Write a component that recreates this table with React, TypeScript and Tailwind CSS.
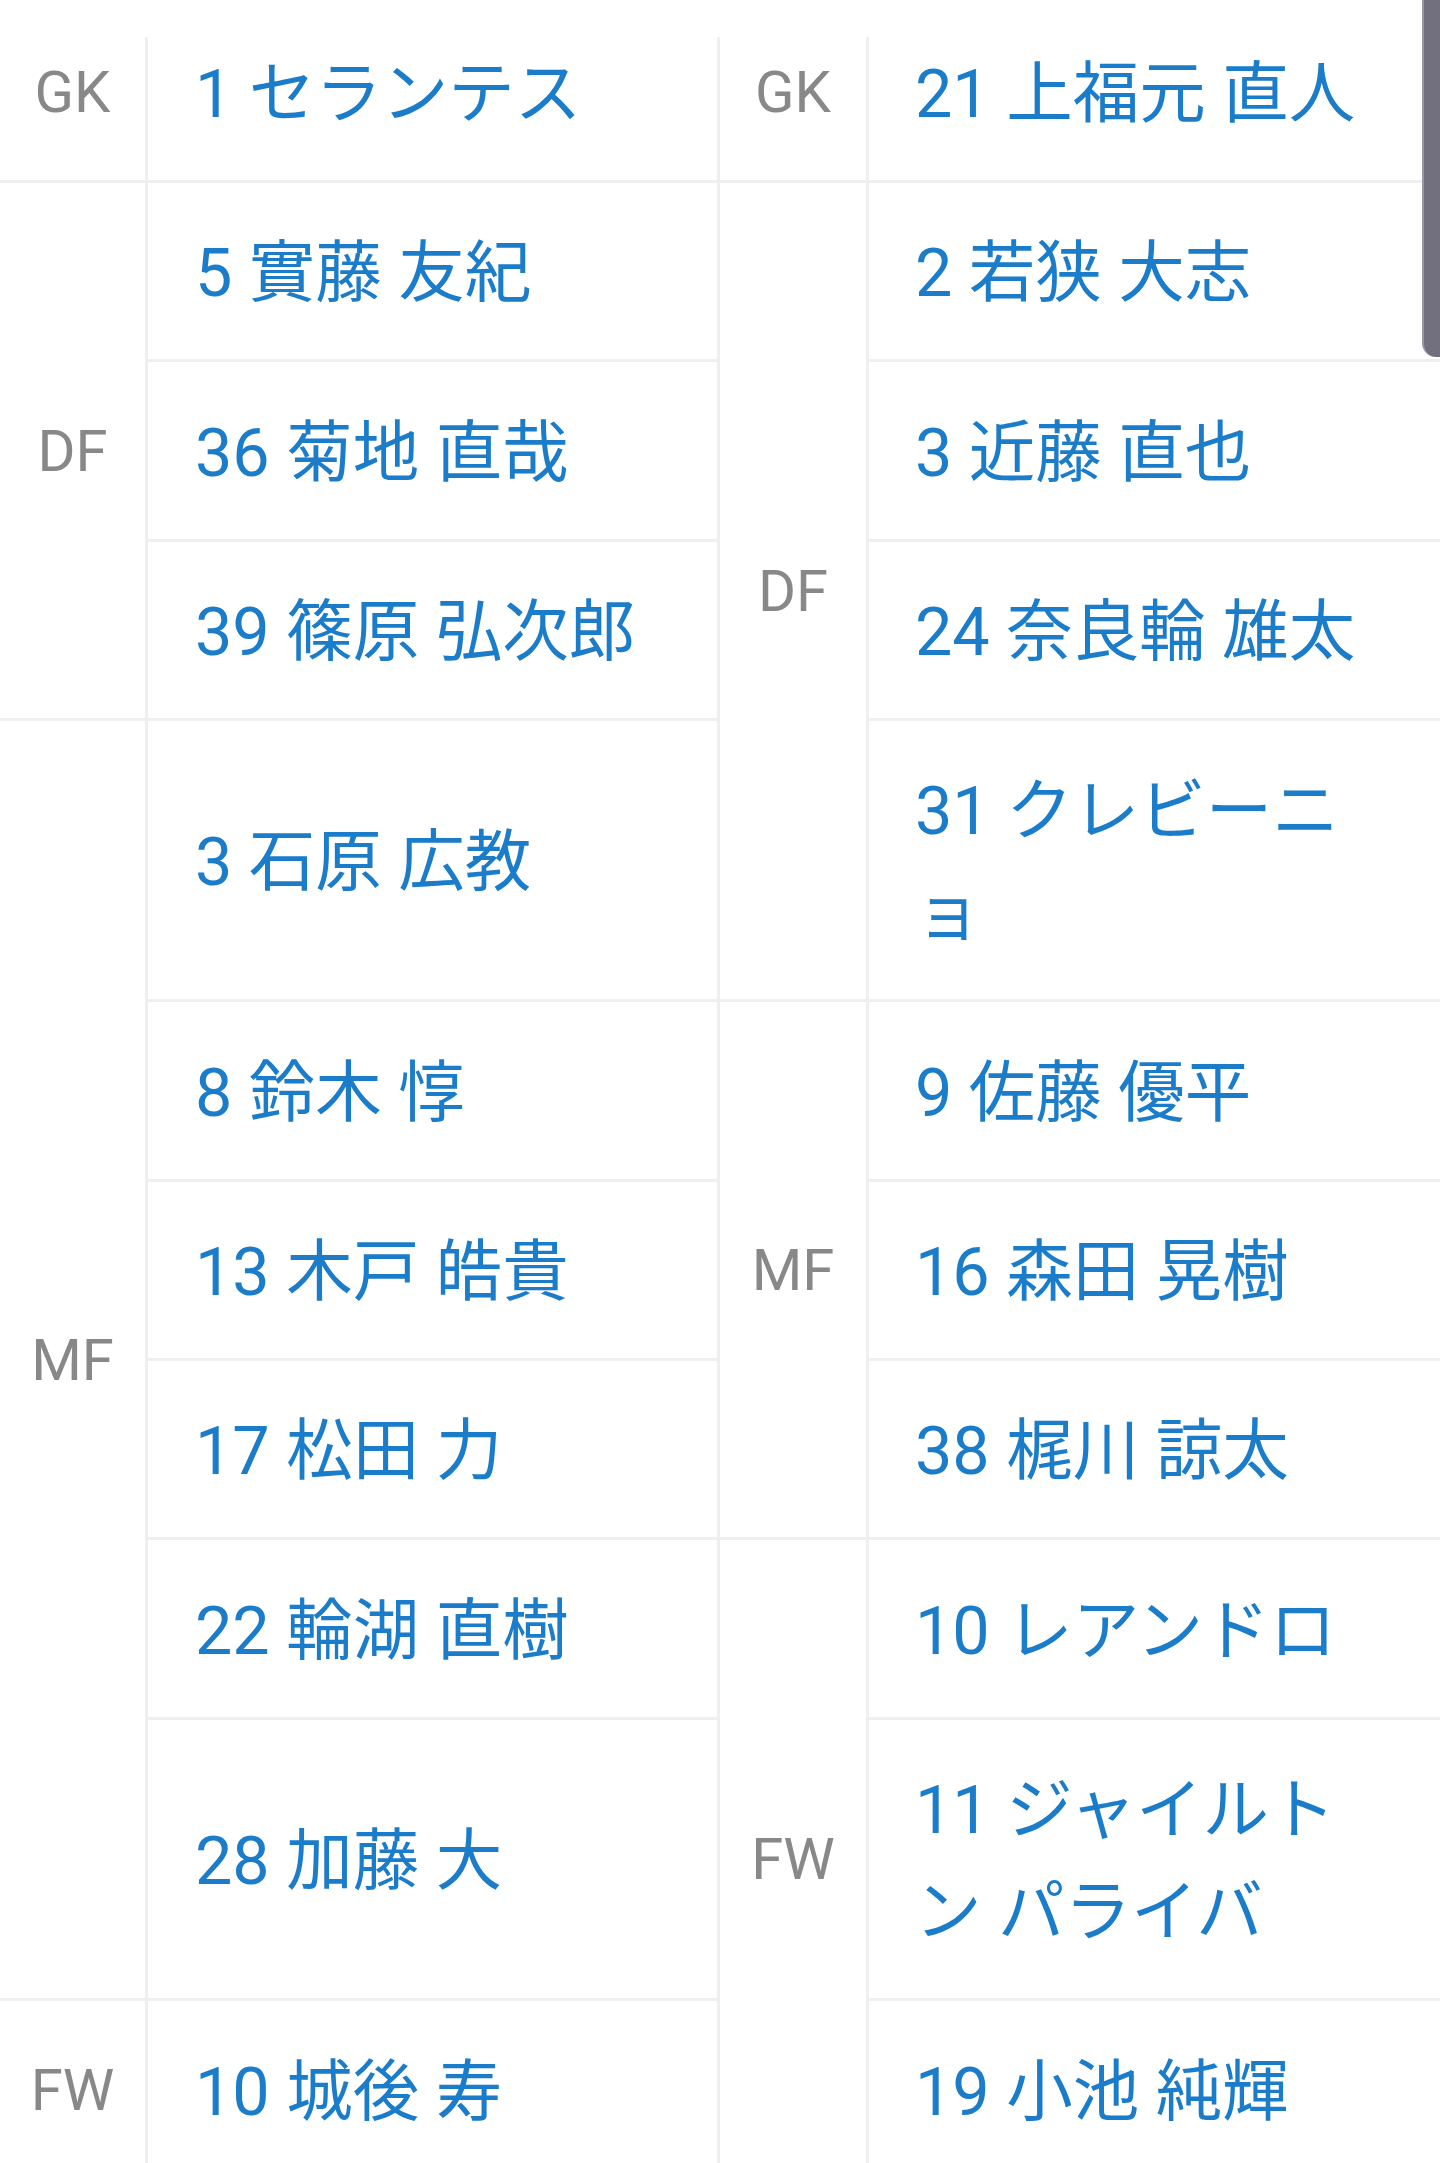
import React from 'react';

type Cell = { pos?: string; span?: number; name: React.ReactNode };
type Row = { h: string; left: Cell; right: Cell };

const rows: Row[] = [
  { h: 'h-[180px]', left: { pos: 'GK', span: 1, name: '1 セランテス' }, right: { pos: 'GK', span: 1, name: '21 上福元 直人' } },
  { h: 'h-[179px]', left: { pos: 'DF', span: 3, name: '5 實藤 友紀' }, right: { pos: 'DF', span: 4, name: '2 若狭 大志' } },
  { h: 'h-[180px]', left: { name: '36 菊地 直哉' }, right: { name: '3 近藤 直也' } },
  { h: 'h-[179px]', left: { name: '39 篠原 弘次郎' }, right: { name: '24 奈良輪 雄太' } },
  {
    h: 'h-[281px]',
    left: { pos: 'MF', span: 6, name: '3 石原 広教' },
    right: {
      name: (
        <>
          31 クレビーニ
          <br />ョ
        </>
      ),
    },
  },
  { h: 'h-[180px]', left: { name: '8 鈴木 惇' }, right: { pos: 'MF', span: 3, name: '9 佐藤 優平' } },
  { h: 'h-[179px]', left: { name: '13 木戸 皓貴' }, right: { name: '16 森田 晃樹' } },
  { h: 'h-[179px]', left: { name: '17 松田 力' }, right: { name: '38 梶川 諒太' } },
  { h: 'h-[180px]', left: { name: '22 輪湖 直樹' }, right: { pos: 'FW', span: 3, name: '10 レアンドロ' } },
  {
    h: 'h-[281px]',
    left: { name: '28 加藤 大' },
    right: {
      name: (
        <>
          11 ジャイルト
          <br />
          ン パライバ
        </>
      ),
    },
  },
  { h: 'h-[180px]', left: { pos: 'FW', span: 1, name: '10 城後 寿' }, right: { name: '19 小池 純輝' } },
];

const font = { fontFamily: 'Roboto, "Noto Sans CJK JP", sans-serif' };

function PosCell({ pos, span }: { pos: string; span?: number }) {
  return (
    <td
      rowSpan={span}
      className="border-r-[3px] border-b-[3px] border-[#efefef] text-center align-middle text-[58px] leading-none text-[#888888]"
    >
      {pos}
    </td>
  );
}

function NameCell({ name, last }: { name: React.ReactNode; last?: boolean }) {
  return (
    <td
      className={
        last
          ? 'border-b-[3px] border-[#efefef] pt-[6px] pl-[46px] align-middle text-[66.5px] leading-[101.6px] whitespace-nowrap text-[#1b7cca]'
          : 'border-r-[3px] border-b-[3px] border-[#efefef] pt-[6px] pl-[47px] align-middle text-[66.5px] leading-[101.6px] whitespace-nowrap text-[#1b7cca]'
      }
    >
      {name}
    </td>
  );
}

export default function App() {
  return (
    <div className="relative w-[1440px] bg-white" style={font}>
      <div className="pt-[3px]">
        <table className="w-[1440px] table-fixed border-separate border-spacing-0">
          <colgroup>
            <col className="w-[148px]" />
            <col className="w-[572px]" />
            <col className="w-[149px]" />
            <col className="w-[571px]" />
          </colgroup>
          <tbody>
            {rows.map((row, i) => (
              <tr key={i} className={row.h}>
                {row.left.pos && <PosCell pos={row.left.pos} span={row.left.span} />}
                <NameCell name={row.left.name} />
                {row.right.pos && <PosCell pos={row.right.pos} span={row.right.span} />}
                <NameCell name={row.right.name} last />
              </tr>
            ))}
          </tbody>
        </table>
      </div>

      {/* white strip over the top of the table */}
      <div className="absolute top-0 left-0 h-[37px] w-full bg-white" />

      {/* scrollbar thumb */}
      <div className="absolute top-0 right-0 h-[357px] w-[18px] rounded-bl-[14px] border-l-2 border-[#9a98a4] bg-[#72707e]" />
    </div>
  );
}
